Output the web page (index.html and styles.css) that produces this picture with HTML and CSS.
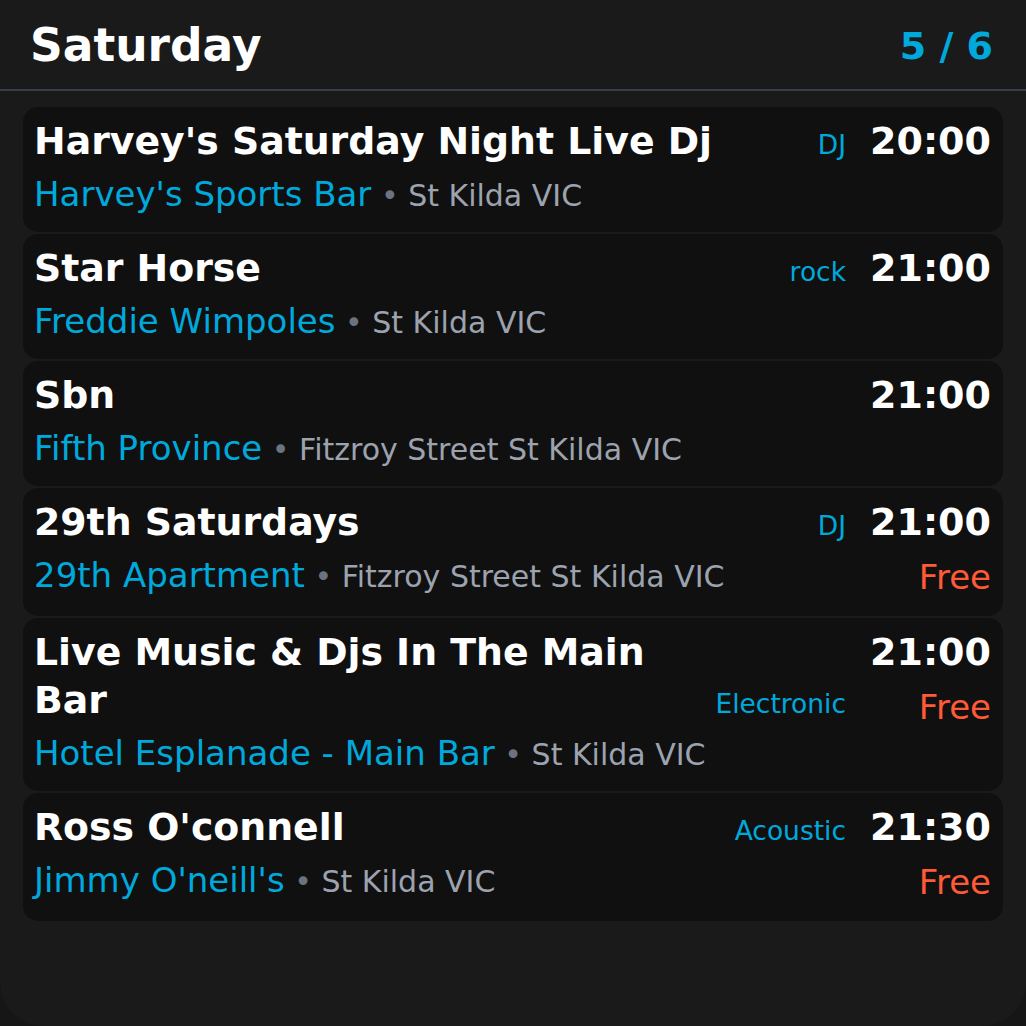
FILE: index.html
```html
<!DOCTYPE html>
<html lang="en">
<head>
<meta charset="utf-8">
<title>Saturday</title>
<link rel="stylesheet" href="styles.css">
</head>
<body>
<div class="screen">
  <header class="header">
    <h1 class="day">Saturday</h1>
    <div class="page">5 / 6</div>
  </header>
  <main class="list">
    <article class="card">
      <div class="main">
        <div class="title-row">
          <h2 class="title">Harvey's Saturday Night Live Dj</h2>
          <span class="tag">DJ</span>
        </div>
        <div class="venue">Harvey's Sports Bar<span class="loc"> <span class="dot">•</span> St Kilda VIC</span></div>
      </div>
      <div class="side">
        <div class="time">20:00</div>
      </div>
    </article>
    <article class="card">
      <div class="main">
        <div class="title-row">
          <h2 class="title">Star Horse</h2>
          <span class="tag">rock</span>
        </div>
        <div class="venue">Freddie Wimpoles<span class="loc"> <span class="dot">•</span> St Kilda VIC</span></div>
      </div>
      <div class="side">
        <div class="time">21:00</div>
      </div>
    </article>
    <article class="card">
      <div class="main">
        <div class="title-row">
          <h2 class="title">Sbn</h2>
        </div>
        <div class="venue">Fifth Province<span class="loc"> <span class="dot">•</span> Fitzroy Street St Kilda VIC</span></div>
      </div>
      <div class="side">
        <div class="time">21:00</div>
      </div>
    </article>
    <article class="card">
      <div class="main">
        <div class="title-row">
          <h2 class="title">29th Saturdays</h2>
          <span class="tag">DJ</span>
        </div>
        <div class="venue">29th Apartment<span class="loc"> <span class="dot">•</span> Fitzroy Street St Kilda VIC</span></div>
      </div>
      <div class="side">
        <div class="time">21:00</div>
        <div class="price">Free</div>
      </div>
    </article>
    <article class="card">
      <div class="main">
        <div class="title-row">
          <h2 class="title">Live Music &amp; Djs In The Main Bar</h2>
          <span class="tag">Electronic</span>
        </div>
        <div class="venue">Hotel Esplanade - Main Bar<span class="loc"> <span class="dot">•</span> St Kilda VIC</span></div>
      </div>
      <div class="side">
        <div class="time">21:00</div>
        <div class="price">Free</div>
      </div>
    </article>
    <article class="card">
      <div class="main">
        <div class="title-row">
          <h2 class="title">Ross O'connell</h2>
          <span class="tag">Acoustic</span>
        </div>
        <div class="venue">Jimmy O'neill's<span class="loc"> <span class="dot">•</span> St Kilda VIC</span></div>
      </div>
      <div class="side">
        <div class="time">21:30</div>
        <div class="price">Free</div>
      </div>
    </article>
  </main>
</div>
</body>
</html>
```

FILE: styles.css
```css
html, body {
  margin: 0;
  padding: 0;
  background: #161616;
}

body {
  font-family: "DejaVu Sans", "Liberation Sans", sans-serif;
  color: #ffffff;
}

.screen {
  width: 1026px;
  height: 1026px;
  background: #1a1a1a;
  border-radius: 0 0 44px 44px;
  overflow: hidden;
  box-sizing: border-box;
}

.header {
  height: 91px;
  box-sizing: border-box;
  display: flex;
  align-items: center;
  justify-content: space-between;
  padding: 2px 33px 0 30px;
  border-bottom: 2px solid #373d49;
}

.day {
  margin: 0;
  font-size: 45.5px;
  font-weight: bold;
  line-height: 1;
  color: #ffffff;
}

.page {
  font-size: 38px;
  font-weight: bold;
  color: #00a9dc;
  line-height: 1;
}

.list {
  display: flex;
  flex-direction: column;
  gap: 2px;
  padding: 16px 23px 0 23px;
}

.card {
  display: flex;
  align-items: flex-start;
  gap: 24px;
  background: #101010;
  border-radius: 15px;
  padding: 10px 12px 14px 11px;
}

.main {
  flex: 1;
  min-width: 0;
}

.title-row {
  display: flex;
  align-items: last baseline;
  gap: 14px;
}

.title {
  flex: 1;
  min-width: 0;
  margin: 0;
  font-size: 37.8px;
  font-weight: bold;
  line-height: 48px;
  color: #ffffff;
}

.tag {
  flex-shrink: 0;
  font-size: 26.5px;
  line-height: 32px;
  color: #00a9dc;
}

.venue {
  margin-top: 5px;
  font-size: 34px;
  line-height: 48px;
  height: 48px;
  color: #00a9dc;
  white-space: nowrap;
}

.loc {
  font-size: 30px;
  line-height: 1;
  color: #9ca3af;
}

.dot {
  color: #6b7280;
}

.side {
  flex-shrink: 0;
  text-align: right;
}

.time {
  font-size: 38px;
  font-weight: bold;
  line-height: 48px;
  color: #ffffff;
}

.price {
  margin-top: 6px;
  font-size: 34px;
  line-height: 50px;
  color: #ff5a36;
}
```
